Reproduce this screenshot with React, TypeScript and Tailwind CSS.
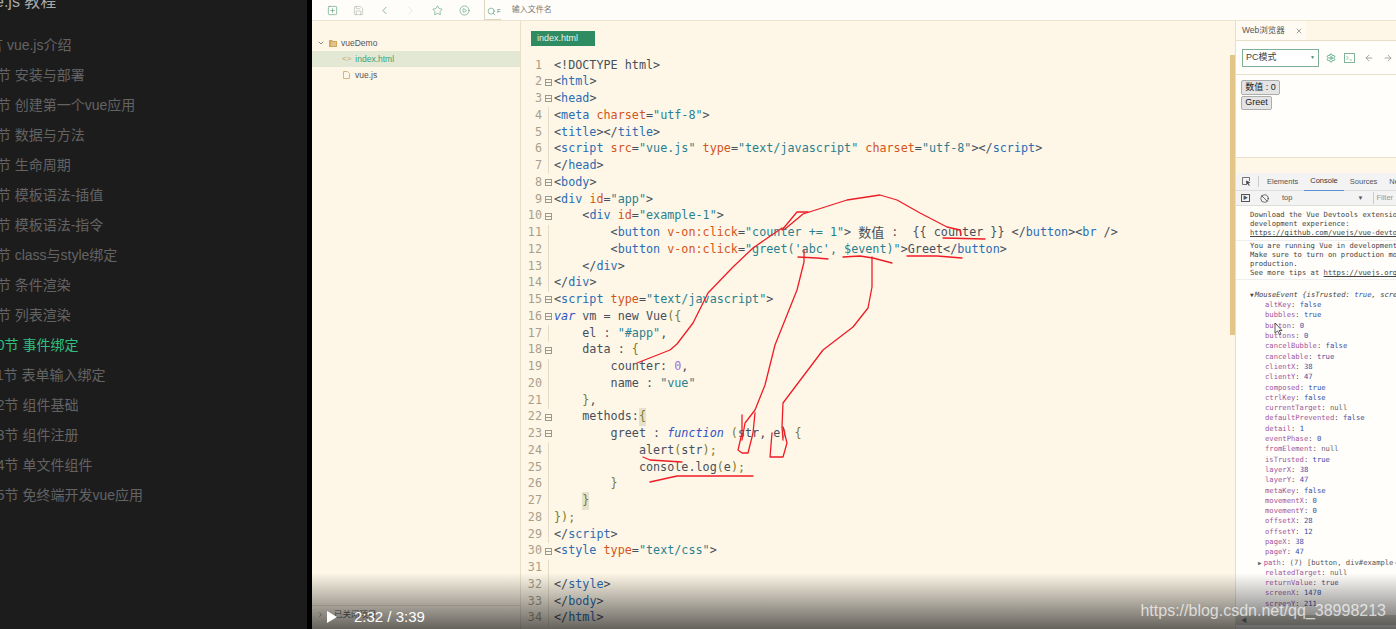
import { ChevronDown, ChevronLeft, ChevronRight, CirclePlay, ArrowLeft, ArrowRight, Ban, Save, Search, Settings, SquarePlus, Star, X } from "lucide-react";

const chapters = [
  "前言 vue.js介绍",
  "第1节 安装与部署",
  "第2节 创建第一个vue应用",
  "第3节 数据与方法",
  "第4节 生命周期",
  "第5节 模板语法-插值",
  "第6节 模板语法-指令",
  "第7节 class与style绑定",
  "第8节 条件渲染",
  "第9节 列表渲染",
  "第10节 事件绑定",
  "第11节 表单输入绑定",
  "第12节 组件基础",
  "第13节 组件注册",
  "第14节 单文件组件",
  "第15节 免终端开发vue应用",
];

const tokenColors: Record<string, string> = {
  d: "text-[#47505a]",
  t: "text-[#2b6cb5]",
  a: "text-[#d4541a]",
  s: "text-[#2a7f8e]",
  k: "text-[#2f52c4] italic",
  n: "text-[#a56be2]",
  b: "text-[#7d7a2c]",
  h: "text-[#7d7a2c] bg-[#e6e1cc]",
  c: "text-[#47505a] text-[13px]",
};

type Part = [string, string];
const code: { fold?: boolean; parts: Part[] }[] = [
  { parts: [["<!DOCTYPE html>", "d"]] },
  { fold: true, parts: [["<", "d"], ["html", "t"], [">", "d"]] },
  { fold: true, parts: [["<", "d"], ["head", "t"], [">", "d"]] },
  { parts: [["<", "d"], ["meta ", "t"], ["charset", "a"], ["=", "d"], ['"utf-8"', "s"], [">", "d"]] },
  { parts: [["<", "d"], ["title", "t"], ["></", "d"], ["title", "t"], [">", "d"]] },
  { parts: [["<", "d"], ["script ", "t"], ["src", "a"], ["=", "d"], ['"vue.js" ', "s"], ["type", "a"], ["=", "d"], ['"text/javascript" ', "s"], ["charset", "a"], ["=", "d"], ['"utf-8"', "s"], ["></", "d"], ["script", "t"], [">", "d"]] },
  { parts: [["</", "d"], ["head", "t"], [">", "d"]] },
  { fold: true, parts: [["<", "d"], ["body", "t"], [">", "d"]] },
  { fold: true, parts: [["<", "d"], ["div ", "t"], ["id", "a"], ["=", "d"], ['"app"', "s"], [">", "d"]] },
  { fold: true, parts: [["    <", "d"], ["div ", "t"], ["id", "a"], ["=", "d"], ['"example-1"', "s"], [">", "d"]] },
  { parts: [["        <", "d"], ["button ", "t"], ["v-on:click", "a"], ["=", "d"], ['"counter += 1"', "s"], ["> ", "d"], ["数值", "c"], [" :  {{ counter }} </", "d"], ["button", "t"], ["><", "d"], ["br ", "t"], ["/>", "d"]] },
  { parts: [["        <", "d"], ["button ", "t"], ["v-on:click", "a"], ["=", "d"], [`"greet('abc', $event)"`, "s"], [">Greet</", "d"], ["button", "t"], [">", "d"]] },
  { parts: [["    </", "d"], ["div", "t"], [">", "d"]] },
  { parts: [["</", "d"], ["div", "t"], [">", "d"]] },
  { fold: true, parts: [["<", "d"], ["script ", "t"], ["type", "a"], ["=", "d"], ['"text/javascript"', "s"], [">", "d"]] },
  { fold: true, parts: [["var ", "k"], ["vm = new Vue", "d"], ["({", "b"]] },
  { parts: [["    el : ", "d"], ['"#app"', "s"], [",", "d"]] },
  { fold: true, parts: [["    data : ", "d"], ["{", "b"]] },
  { parts: [["        counter: ", "d"], ["0", "n"], [",", "d"]] },
  { parts: [["        name : ", "d"], ['"vue"', "s"]] },
  { parts: [["    ", "d"], ["}", "b"], [",", "d"]] },
  { fold: true, parts: [["    methods:", "d"], ["{", "h"]] },
  { fold: true, parts: [["        greet : ", "d"], ["function ", "k"], ["(", "b"], ["str, e", "d"], [") {", "b"]] },
  { parts: [["            alert", "d"], ["(", "b"], ["str", "d"], [");", "b"]] },
  { parts: [["            console.log", "d"], ["(", "b"], ["e", "d"], [");", "b"]] },
  { parts: [["        ", "d"], ["}", "b"]] },
  { parts: [["    ", "d"], ["}", "h"]] },
  { parts: [["}", "b"], [");", "b"]] },
  { parts: [["</", "d"], ["script", "t"], [">", "d"]] },
  { fold: true, parts: [["<", "d"], ["style ", "t"], ["type", "a"], ["=", "d"], ['"text/css"', "s"], [">", "d"]] },
  { parts: [] },
  { parts: [["</", "d"], ["style", "t"], [">", "d"]] },
  { parts: [["</", "d"], ["body", "t"], [">", "d"]] },
  { parts: [["</", "d"], ["html", "t"], [">", "d"]] },
];

const props: [string, string][] = [
  ["altKey", "false"], ["bubbles", "true"], ["button", "0"], ["buttons", "0"],
  ["cancelBubble", "false"], ["cancelable", "true"], ["clientX", "38"], ["clientY", "47"],
  ["composed", "true"], ["ctrlKey", "false"], ["currentTarget", "null"], ["defaultPrevented", "false"],
  ["detail", "1"], ["eventPhase", "0"], ["fromElement", "null"], ["isTrusted", "true"],
  ["layerX", "38"], ["layerY", "47"], ["metaKey", "false"], ["movementX", "0"],
  ["movementY", "0"], ["offsetX", "28"], ["offsetY", "12"], ["pageX", "38"], ["pageY", "47"],
  ["path", "(7) [button, div#example-1"], ["relatedTarget", "null"], ["returnValue", "true"],
  ["screenX", "1470"], ["screenY", "211"],
];

const strokes = [
  "M637 363L670 350L677 344L693 323L708 293L733 267L753 248L782 228",
  "M782 230L797 212L808 212",
  "M785 229L803 214L847 200L880 195L897 200L920 213L947 227L960 230L961 235",
  "M943 238L985 239",
  "M798 257L817 258L828 259",
  "M804 250L804 262L797 290L775 345L765 385L755 410L745 423L742 440",
  "M742 415L742 433L738 450L742 453L748 453L753 433L755 413",
  "M843 257L860 256L873 258L892 263",
  "M872 257L872 287L868 308L853 327L823 350L783 403L782 427L783 440",
  "M772 433L770 457L783 457L787 443L783 427",
  "M907 256L937 256L962 258",
  "M643 457L650 460L682 462",
  "M650 482L677 476L753 476",
];

const App = () => {
  return (
    <div className="relative flex h-[629px] w-[1396px] overflow-hidden bg-black font-['Liberation_Sans','Noto_Sans_CJK_SC',sans-serif]">
      {/* course outline */}
      <div className="h-full w-[307px] shrink-0 overflow-hidden whitespace-nowrap bg-[#1c1c1c]">
        <div className="-mt-[13px] mb-[13px] -ml-[24px] flex h-[30px] items-center text-base text-[#a8a8a8]">Vue.js 教程</div>
        {chapters.map((c, i) => (
          <div key={c} className={`-ml-[25px] flex h-[30px] items-center text-sm ${i === 10 ? "text-[#2fc07f]" : "text-[#636363]"}`}>
            {c}
          </div>
        ))}
      </div>

      <div className="ml-[5px] flex h-full flex-1 flex-col bg-[#fef7e8]">
        {/* top toolbar */}
        <div className="flex h-[21px] shrink-0 items-center border-b border-[#ece4d0] bg-[#fffdf9] pl-[15px] text-[#8a9a90]">
          <SquarePlus size={11} strokeWidth={1.2} className="text-[#3f8f6a]" />
          <Save size={11} strokeWidth={1} className="ml-[15px]" />
          <ChevronLeft size={13} strokeWidth={1.2} className="ml-[14px] text-[#3f8f6a]" />
          <ChevronRight size={13} strokeWidth={1} className="ml-[13px] text-[#c9d4cc]" />
          <Star size={11} strokeWidth={1.2} className="ml-[15px] text-[#3f8f6a]" />
          <CirclePlay size={11} strokeWidth={1.2} className="ml-[16px] text-[#3f8f6a]" />
          <div className="ml-[14px] flex h-full items-end border-b border-l border-[#ddd5c0] pb-[3px] pl-[2px]">
            <Search size={9} strokeWidth={1.5} className="text-[#3f8f6a]" />
            <span className="ml-[1px] text-[6px] text-[#777]">F</span>
          </div>
          <span className="ml-[11px] text-[8px] text-[#777]">输入文件名</span>
        </div>

        <div className="flex min-h-0 flex-1">
          {/* file tree */}
          <div className="flex w-[209px] shrink-0 flex-col border-r border-[#e8dfc8] text-[8.5px]">
            <div className="mt-[14px] flex h-4 items-center pl-[5px] text-[#555]">
              <ChevronDown size={8} />
              <svg width="8" height="7" viewBox="0 0 8 7" className="ml-[4px]">
                <path d="M0 0H3L4 1H8V7H0Z" fill="#cfa95e" />
                <path d="M2 3H7M2 5H7" stroke="#fef7e8" strokeWidth="0.7" />
              </svg>
              <span className="ml-[4px]">vueDemo</span>
            </div>
            <div className="flex h-4 items-center bg-[#e2e8d3] pl-[30px] text-[#37a578]">
              <span className="text-[8px] text-[#c8a66a]">&lt;&gt;</span>
              <span className="ml-[4px]">index.html</span>
            </div>
            <div className="flex h-4 items-center pl-[31px] text-[#555]">
              <svg width="7" height="8" viewBox="0 0 7 8">
                <path d="M.5.5H4.5L6.5 2.5V7.5H.5Z" fill="none" stroke="#d2b67e" />
              </svg>
              <span className="ml-[5px]">vue.js</span>
            </div>
            <div className="mt-auto mb-[6px] flex h-[18px] items-center border-t border-[#e8dfc8] pl-[5px] text-[#666]">
              <ChevronRight size={7} />
              <span className="ml-[10px]">已关闭项目</span>
            </div>
          </div>

          {/* editor */}
          <div className="flex min-w-0 flex-1">
            <div className="min-w-0 flex-1 overflow-hidden">
              <div className="mt-[10px] ml-[10px] flex h-[15px] w-[64px] items-center bg-[#2e8b62] pl-[6px] text-[9px] text-[#e6f3ec]">index.html</div>
              <div className="mt-[11px] font-['DejaVu_Sans_Mono','Noto_Sans_CJK_SC',monospace] text-[11.75px]">
                {code.map((line, i) => (
                  <div key={i} className="flex h-[16.76px] items-center whitespace-pre">
                    <span className="w-[21px] shrink-0 text-right text-[#a89f8b]">{i + 1}</span>
                    <span className="ml-px flex h-full w-[11px] shrink-0 items-center justify-center">
                      {line.fold ? (
                        <span className="flex h-[7px] w-[7px] items-center justify-center border border-[#9a9a8c]">
                          <span className="h-px w-[5px] bg-[#9a9a8c]" />
                        </span>
                      ) : i > 2 ? (
                        <span className="h-full w-px bg-[#e5ddc9]" />
                      ) : null}
                    </span>
                    {line.parts.map(([text, kind], j) => (
                      <span key={j} className={tokenColors[kind]}>{text}</span>
                    ))}
                  </div>
                ))}
              </div>
            </div>
            <div className="w-[5px] shrink-0 pt-[34px]">
              <div className="h-[280px] bg-[#e3c58a]" />
            </div>
          </div>

          {/* preview and devtools */}
          <div className="flex w-[161px] shrink-0 flex-col overflow-hidden border-l border-[#e8dfc8] bg-[#fffefb] text-[9px]">
            <div className="flex h-[20px] shrink-0 border-b border-[#e8dfc8] bg-[#fef7e8]">
              <div className="flex w-[70px] items-center bg-[#fffbf3] pl-[6px] text-[8.5px] text-[#555]">
                Web浏览器
                <X size={8} className="ml-[10px] text-[#777]" />
              </div>
            </div>
            <div className="flex h-[34px] shrink-0 items-center border-b border-[#e8dfc8] pl-[6px]">
              <div className="flex h-[18px] w-[77px] items-center border border-[#7fae98] bg-white px-[3px] text-[9px] text-[#444]">
                PC模式
                <span className="ml-auto text-[5px] text-[#3f8f6a]">▼</span>
              </div>
              <Settings size={10} className="ml-[7px] text-[#3f9f76]" />
              <svg width="11" height="10" viewBox="0 0 11 10" fill="none" className="ml-[8px]">
                <rect x=".5" y=".5" width="10" height="9" stroke="#7fb39b" />
                <path d="M2.5 3L4.5 5L2.5 7M5.5 7H8" stroke="#7fb39b" strokeWidth=".8" />
              </svg>
              <ArrowLeft size={10} className="ml-[9px] text-[#999]" />
              <ArrowRight size={10} className="ml-[9px] text-[#999]" />
            </div>
            <div className="flex h-[82px] shrink-0 flex-col items-start pt-[5px] pl-[5px] text-[#222]">
              <div className="flex h-[15px] w-[39px] items-center justify-center rounded-[2px] border border-[#adadad] bg-[#e4e4e4] text-[9px]">数值 : 0</div>
              <div className="mt-px flex h-[14px] w-[31px] items-center justify-center rounded-[2px] border border-[#adadad] bg-[#e4e4e4] text-[9px]">Greet</div>
            </div>
            <div className="h-[16px] shrink-0 border-t border-[#e8dfc8] bg-[#fef7e8]" />

            <div className="flex h-[18px] shrink-0 items-center border-b border-[#ddd] bg-[#f3f3f3] pl-[6px] text-[7.5px] text-[#555]">
              <svg width="9" height="9" viewBox="0 0 9 9" fill="none" className="shrink-0">
                <path d="M5 7.5H.5V.5H7.5V4" stroke="#555" strokeWidth=".8" />
                <path d="M4 3.5L8.5 5.5L6.5 6.2L7.8 8.5L7 9L5.8 6.8L4.5 8Z" fill="#444" />
              </svg>
              <div className="ml-[7px] h-[11px] w-px shrink-0 bg-[#ccc]" />
              <span className="ml-[8px]">Elements</span>
              <span className="ml-[6px] border-b border-[#5b8fd6] px-[6px] py-[3px] text-[#333]">Console</span>
              <span className="ml-[6px]">Sources</span>
              <span className="ml-[12px]">Network</span>
            </div>
            <div className="flex h-[15px] shrink-0 items-center border-b border-[#ddd] bg-[#f3f3f3] pl-[5px] text-[7.5px] text-[#555]">
              <span className="flex h-[8px] w-[9px] items-center justify-center border border-[#555] text-[5px]">▶</span>
              <Ban size={9} strokeWidth={2} className="ml-[10px] text-[#444]" />
              <span className="ml-[13px]">top</span>
              <span className="ml-[65px] text-[6px]">▼</span>
              <div className="ml-[10px] border-l border-[#ccc] pl-[2px] text-[#999]">Filter</div>
            </div>

            <div className="min-h-0 flex-1 overflow-hidden whitespace-pre font-['DejaVu_Sans_Mono',monospace] text-[7.2px] leading-[9.2px] text-[#444]">
              <div className="border-b border-[#eee] pt-[4px] pb-[2px] pl-[14px]">
                <div>Download the Vue Devtools extension for a better</div>
                <div>development experience:</div>
                <div className="underline">https://github.com/vuejs/vue-devtools</div>
              </div>
              <div className="border-b border-[#eee] pb-[2px] pl-[14px]">
                <div>You are running Vue in development mode.</div>
                <div>Make sure to turn on production mode when deploying for</div>
                <div>production.</div>
                <div>See more tips at <span className="underline">https://vuejs.org/guide/</span></div>
              </div>
              <div className="mt-[10px] flex pl-[15px] italic">
                <span className="-ml-[1px] mr-[1px] text-[6px] not-italic">▼</span>
                <span>MouseEvent {"{"}isTrusted: <span className="text-[#3b4ea0]">true</span>, screenX: 1470</span>
              </div>
              {props.map(([key, value]) => (
                <div key={key} className="flex h-[10.3px] items-center pl-[29px]">
                  {key === "path" && <span className="-ml-[7px] mr-[2px] text-[6px] text-[#666]">▶</span>}
                  <span className="text-[#a0559c]">{key}</span>
                  <span className="text-[#444]">: </span>
                  <span className={value === "null" ? "text-[#666]" : key === "path" ? "text-[#555]" : "text-[#3b4ea0]"}>{value}</span>
                </div>
              ))}
            </div>

            {/* console scrollbar */}
            <div className="mb-[4px] flex h-[10px] shrink-0 items-center bg-[#d8d4ca] pl-[5px] text-[6px] text-[#777]">◀</div>
          </div>
        </div>
      </div>

      {/* pen annotations */}
      <svg className="pointer-events-none absolute inset-0" width="1396" height="629" fill="none" stroke="#ee1c25" strokeWidth="1.3" strokeLinejoin="round" strokeLinecap="round">
        {strokes.map((d) => (
          <path key={d} d={d} />
        ))}
      </svg>

      {/* cursor */}
      <svg className="absolute top-[322px] left-[1274px]" width="9" height="13" viewBox="0 0 9 13">
        <path d="M1 1V11L3.5 9L5.5 12.5L7 11.5L5 8.5H8Z" fill="#fff" stroke="#333" strokeWidth="0.8" />
      </svg>

      {/* video controls */}
      <div className="absolute right-0 bottom-0 left-[312px] h-[56px] bg-gradient-to-b from-transparent to-black/60" />
      <div className="absolute bottom-px left-[327px] flex items-center text-white">
        <svg width="10" height="12" viewBox="0 0 10 12">
          <path d="M0 0L10 6L0 12Z" fill="#fff" />
        </svg>
        <span className="ml-[17px] text-[15px]">2:32 / 3:39</span>
      </div>
      <div className="absolute right-[10px] bottom-[6px] text-base text-white/70">https://blog.csdn.net/qq_38998213</div>
    </div>
  );
};

export default App;
